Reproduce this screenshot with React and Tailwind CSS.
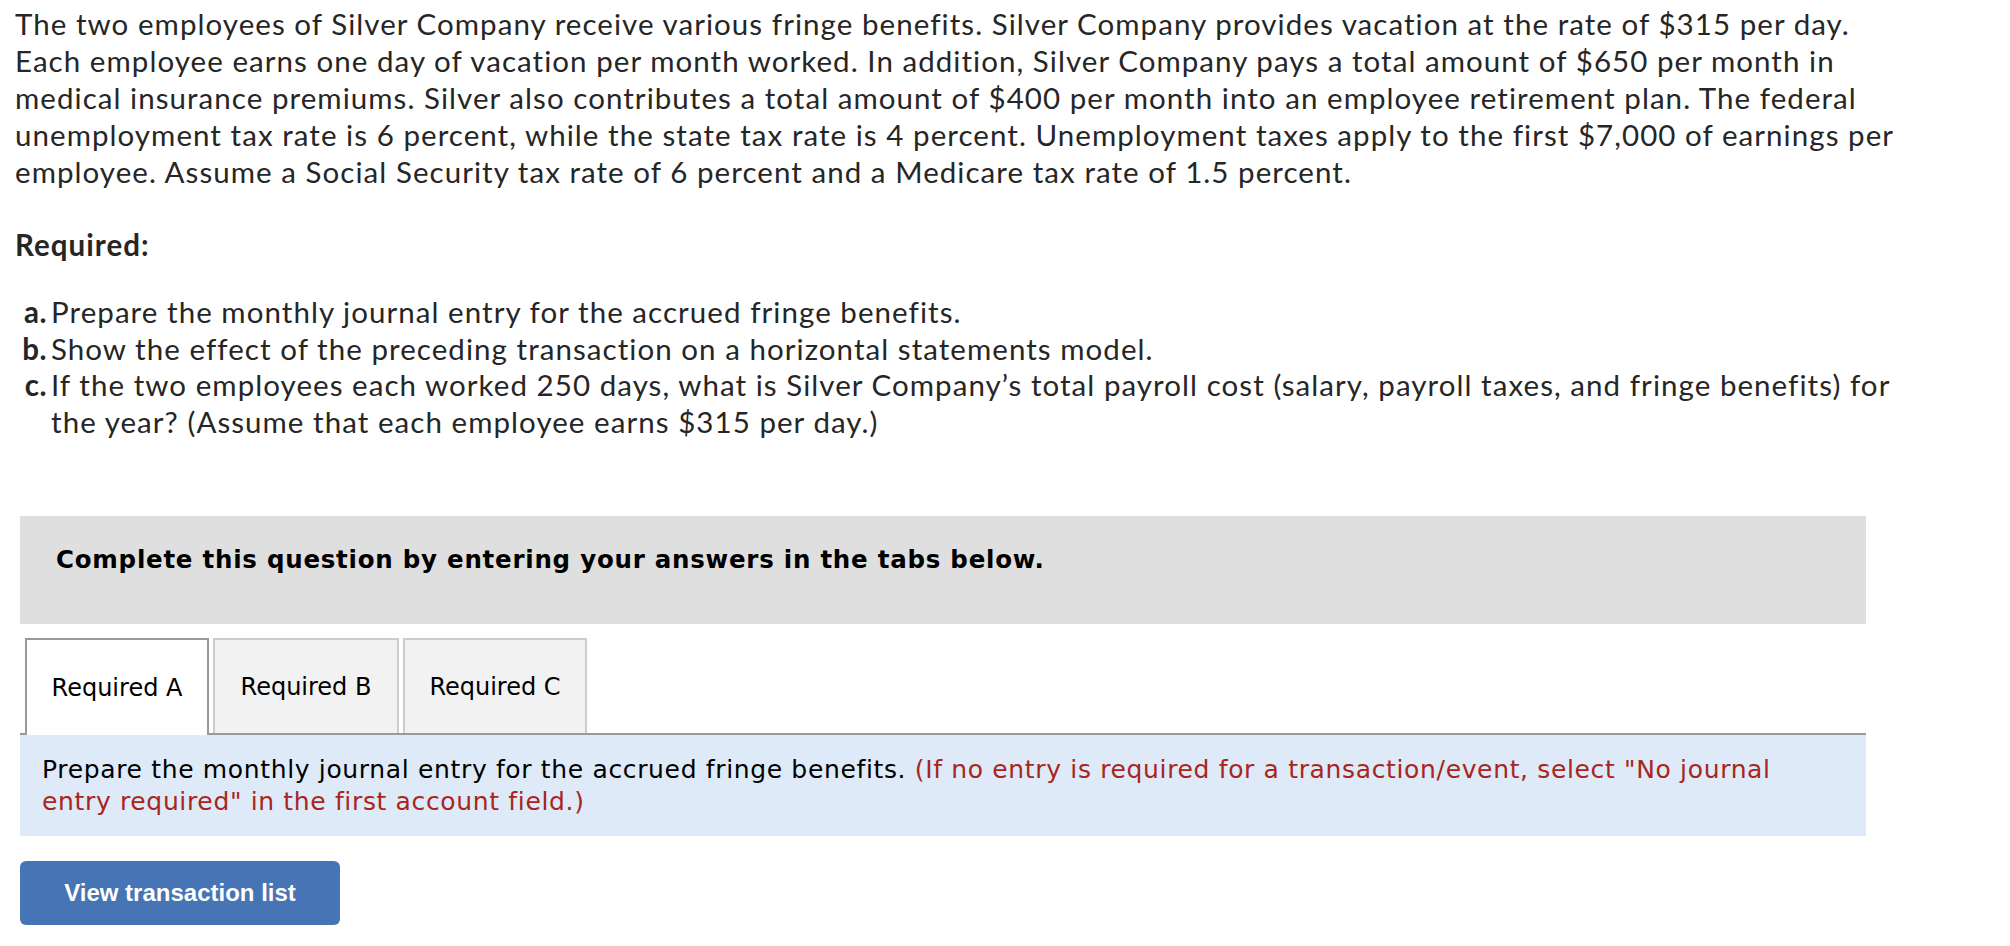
import React from "react";

const body = "font-['Lato','Noto_Sans',sans-serif]";
const verdana = "font-['DejaVu_Sans','Verdana',sans-serif]";

function Item({ label, children }) {
  return (
    <div className="flex">
      <span className="w-[36px] shrink-0 text-right font-bold pr-[4px] tracking-[0.5px]">{label}</span>
      <span>{children}</span>
    </div>
  );
}

export default function App() {
  return (
    <div className="bg-white min-h-[946px] w-[2010px] overflow-hidden">
      {/* QUESTION */}
      <div className={`${body} text-[#262626] text-[29.5px] tracking-[1.05px] leading-[37px] pl-[15px] pt-[5px]`}>
        <p>
          The two employees of Silver Company receive various fringe benefits. Silver Company provides vacation at the rate of $315 per day.
          <br />
          Each employee earns one day of vacation per month worked. In addition, Silver Company pays a total amount of $650 per month in
          <br />
          medical insurance premiums. Silver also contributes a total amount of $400 per month into an employee retirement plan. The federal
          <br />
          unemployment tax rate is 6 percent, while the state tax rate is 4 percent. Unemployment taxes apply to the first $7,000 of earnings per
          <br />
          employee. Assume a Social Security tax rate of 6 percent and a Medicare tax rate of 1.5 percent.
        </p>

        <p className="font-bold mt-[36px] leading-[38px]">Required:</p>

        <div className="mt-[30px] leading-[36.5px]">
          <Item label="a.">Prepare the monthly journal entry for the accrued fringe benefits.</Item>
          <Item label="b.">Show the effect of the preceding transaction on a horizontal statements model.</Item>
          <Item label="c.">
            If the two employees each worked 250 days, what is Silver Company’s total payroll cost (salary, payroll taxes, and fringe benefits) for
            <br />
            the year? (Assume that each employee earns $315 per day.)
          </Item>
        </div>
      </div>

      {/* ANSWER AREA */}
      <div className={`${verdana} ml-[20px] w-[1846px] mt-[76px]`}>
        <div className="bg-[#dfdfdf] h-[108px] pl-[36px] pt-[28px]">
          <p className="font-bold text-[24.5px] leading-[32px] tracking-[0.75px] text-black">
            Complete this question by entering your answers in the tabs below.
          </p>
        </div>

        <div className="mt-[14px] flex items-end gap-[4px] pl-[5px] border-b-2 border-[#999]">
          <button className="w-[184px] h-[97px] -mb-[2px] bg-white border-2 border-b-0 border-[#999] text-[24px] text-black">
            Required A
          </button>
          <button className="w-[186px] h-[95px] bg-[#f2f2f2] border-2 border-b-0 border-[#ccc] text-[24px] text-black">
            Required B
          </button>
          <button className="w-[184px] h-[95px] bg-[#f2f2f2] border-2 border-b-0 border-[#ccc] text-[24px] text-black">
            Required C
          </button>
        </div>

        <div className="bg-[#deeaf7] pl-[22px] pr-[40px] pt-[19px] pb-[18px] text-[25px] tracking-[0.65px] leading-[32px] text-black">
          Prepare the monthly journal entry for the accrued fringe benefits.{" "}
          <span className="text-[#a82520]">
            (If no entry is required for a transaction/event, select "No journal
            <br />
            entry required" in the first account field.)
          </span>
        </div>

        <button className="mt-[25px] w-[320px] h-[64px] rounded-[6px] bg-[#4674b4] text-white font-bold text-[24px] font-['Liberation_Sans','Arial',sans-serif]">
          View transaction list
        </button>
      </div>
    </div>
  );
}
